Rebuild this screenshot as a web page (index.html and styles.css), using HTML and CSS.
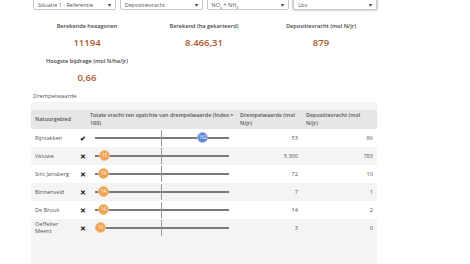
FILE: index.html
```html
<!DOCTYPE html>
<html>
<head>
    <link rel="stylesheet" href="styles.css">
</head>
<body>
    <div class="page">
        <div class="selects">
            <div class="select">Situatie 1 - Referentie<span class="arrow">&#9662;</span></div>
            <div class="select">Depositievracht<span class="arrow">&#9662;</span></div>
            <div class="select">NO<sub>x</sub> + NH<sub>3</sub><span class="arrow">&#9662;</span></div>
            <div class="select focus">Lbv<span class="arrow">&#9662;</span></div>
        </div>

        <div class="stats">
            <div class="stat">
                <div class="stat-label">Berekende hexagonen</div>
                <div class="stat-value">11194</div>
            </div>
            <div class="stat">
                <div class="stat-label">Berekend (ha gekarteerd)</div>
                <div class="stat-value">8.466,31</div>
            </div>
            <div class="stat">
                <div class="stat-label">Depositievracht (mol N/jr)</div>
                <div class="stat-value">879</div>
            </div>
            <div class="stat">
                <div class="stat-label">Hoogste bijdrage (mol N/ha/jr)</div>
                <div class="stat-value">0,66</div>
            </div>
        </div>

        <div class="tabs">
            <div class="tab">Drempelwaarde</div>
        </div>

        <div class="panel">
            <table class="grid">
                <thead>
                    <tr>
                        <th class="c-name">Natuurgebied</th>
                        <th class="c-check"></th>
                        <th class="c-bar">Totale vracht ten opzichte van drempelwaarde (Index = 100)</th>
                        <th class="c-num">Drempelwaarde (mol N/jr)</th>
                        <th class="c-num2">Depositievracht (mol N/jr)</th>
                    </tr>
                </thead>
                <tbody>
                    <tr>
                        <td>Rijntakken</td>
                        <td class="mark">&#10004;</td>
                        <td><div class="bar"><span class="knob blue" style="left: 108px">162</span></div></td>
                        <td class="num">53</td>
                        <td class="num">86</td>
                    </tr>
                    <tr>
                        <td>Veluwe</td>
                        <td class="mark">&#10005;</td>
                        <td><div class="bar"><span class="knob" style="left: 10px">15</span></div></td>
                        <td class="num">5.300</td>
                        <td class="num">783</td>
                    </tr>
                    <tr>
                        <td>Sint Jansberg</td>
                        <td class="mark">&#10005;</td>
                        <td><div class="bar"><span class="knob" style="left: 9px">14</span></div></td>
                        <td class="num">72</td>
                        <td class="num">10</td>
                    </tr>
                    <tr>
                        <td>Binnenveld</td>
                        <td class="mark">&#10005;</td>
                        <td><div class="bar"><span class="knob" style="left: 9px">14</span></div></td>
                        <td class="num">7</td>
                        <td class="num">1</td>
                    </tr>
                    <tr>
                        <td>De Bruuk</td>
                        <td class="mark">&#10005;</td>
                        <td><div class="bar"><span class="knob" style="left: 9px">14</span></div></td>
                        <td class="num">14</td>
                        <td class="num">2</td>
                    </tr>
                    <tr>
                        <td>Oeffelter<br>Meent</td>
                        <td class="mark">&#10005;</td>
                        <td><div class="bar"><span class="knob" style="left: 6px">10</span></div></td>
                        <td class="num">3</td>
                        <td class="num">0</td>
                    </tr>
                </tbody>
            </table>
        </div>
    </div>
</body>
</html>
```

FILE: styles.css
```css
body {
    margin: 0;
    font-family: "Open Sans", "Noto Sans", sans-serif;
    background-color: #ffffff;
    color: #333333;
}
.page {
    width: 346px;
    margin-left: 31px;
}
.selects {
    display: flex;
    gap: 4px;
    margin-top: -10px;
    padding-left: 2px;
}
.select {
    position: relative;
    width: 83px;
    height: 20px;
    box-sizing: border-box;
    border: 1px solid #c8c8c8;
    border-radius: 2px;
    font-size: 5.5px;
    line-height: 8px;
    padding: 10px 4px 0;
    color: #555555;
    background-color: #ffffff;
}
.select.focus {
    width: 84px;
    box-shadow: 0 0 2px 1px #d8d0c8;
}
.select sub {
    font-size: 4px;
    line-height: 0;
}
.arrow {
    position: absolute;
    right: 4px;
    top: 10px;
    font-size: 6px;
    line-height: 8px;
    color: #444444;
}
.stats {
    display: grid;
    grid-template-columns: 112px 122px 112px;
    row-gap: 6px;
    margin-top: 11px;
    text-align: center;
}
.stat-label {
    font-size: 5.6px;
    font-weight: 600;
    color: #444444;
    height: 10px;
    line-height: 10px;
}
.stat-value {
    font-size: 9.5px;
    font-weight: 600;
    color: #a9572b;
    margin-top: 5px;
    line-height: 14px;
}
.tabs {
    display: flex;
    margin-top: 4px;
}
.tab {
    font-size: 5.8px;
    color: #555555;
    padding: 3px 3px 2px 2px;
    line-height: 8px;
    background-color: #ffffff;
}
.panel {
    background-color: #f4f4f4;
    padding-top: 8px;
    height: 160px;
}
.grid {
    border-collapse: collapse;
    width: 100%;
    font-size: 5.6px;
    color: #555555;
}
.grid th {
    background-color: #e6e6e6;
    font-size: 5.4px;
    font-weight: 600;
    text-align: left;
    vertical-align: top;
    line-height: 7.5px;
    padding: 2px 0 2px 4px;
    height: 14px;
}
.grid th.c-name {
    width: 41px;
    vertical-align: middle;
}
.grid th.c-check {
    width: 6px;
}
.grid th.c-bar {
    width: 146px;
    padding-right: 0;
}
.grid th.c-num {
    width: 62px;
}
.grid th.c-num2 {
    padding-right: 16px;
}
.grid td {
    height: 18px;
    padding: 0 0 0 4px;
    line-height: 7px;
}
.grid tbody tr:nth-child(odd) td {
    background-color: #ffffff;
}
.grid td.mark {
    font-size: 7px;
    color: #111111;
    font-weight: bold;
}
.grid td.num {
    text-align: right;
    padding-right: 4px;
}
.bar {
    position: relative;
    width: 134px;
    height: 18px;
    margin-left: 5px;
}
.bar::before {
    content: "";
    position: absolute;
    left: 0;
    right: 0;
    top: 8px;
    height: 1.5px;
    background-color: #7a7a7a;
}
.bar::after {
    content: "";
    position: absolute;
    left: 66px;
    top: 1px;
    width: 1px;
    height: 16px;
    background-color: #9a9a9a;
}
.knob {
    position: absolute;
    top: 3px;
    width: 11px;
    height: 11px;
    margin-left: -6px;
    box-sizing: border-box;
    border-radius: 50%;
    border: 1px solid #f6c48e;
    background-color: #eea352;
    color: #ffffff;
    font-size: 4.5px;
    line-height: 9px;
    text-align: center;
    z-index: 1;
}
.knob.blue {
    border-color: #a9c0ea;
    background-color: #5a85d2;
}
```
